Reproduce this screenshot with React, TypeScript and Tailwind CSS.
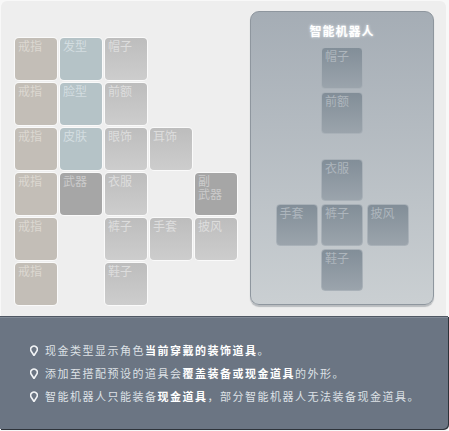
const FONT = { fontFamily: '"Noto Sans CJK SC", "Noto Sans", sans-serif' }

type Tone = 'tan' | 'blue' | 'gray' | 'dark' | 'none'

const TONES: Record<Tone, string> = {
  tan: 'bg-[#c3beb7] text-[#dcd8d1]',
  blue: 'bg-[#b5c3c7] text-[#d3dde0]',
  gray: 'bg-gradient-to-b from-[#bdbdbd] to-[#cdcdcd] text-[#dddddd]',
  dark: 'bg-[#a6a6a6] text-[#cbcbcb]',
  none: '',
}

const GRID: [string, Tone][][] = [
  [['戒指', 'tan'], ['发型', 'blue'], ['帽子', 'gray'], ['', 'none'], ['', 'none']],
  [['戒指', 'tan'], ['脸型', 'blue'], ['前额', 'gray'], ['', 'none'], ['', 'none']],
  [['戒指', 'tan'], ['皮肤', 'blue'], ['眼饰', 'gray'], ['耳饰', 'gray'], ['', 'none']],
  [['戒指', 'tan'], ['武器', 'dark'], ['衣服', 'gray'], ['', 'none'], ['副\n武器', 'dark']],
  [['戒指', 'tan'], ['', 'none'], ['裤子', 'gray'], ['手套', 'gray'], ['披风', 'gray']],
  [['戒指', 'tan'], ['', 'none'], ['鞋子', 'gray'], ['', 'none'], ['', 'none']],
]

function Slot({ label, tone }: { label: string; tone: Tone }) {
  if (tone === 'none') return <div className="w-[42px] h-[42px]" />
  return (
    <div
      className={`w-[42px] h-[42px] rounded-[4px] shadow-[0_0_0_1px_#fafafa] px-[3px] pt-[1px] text-[12px] leading-[13px] whitespace-pre-line ${TONES[tone]}`}
    >
      {label}
    </div>
  )
}

function RobotSlot({ label }: { label: string }) {
  return (
    <div className="w-[42px] h-[42px] rounded-[4px] border border-[#a9b1b8] bg-gradient-to-b from-[#828e98] to-[#9ba4ac] px-[3px] pt-[1px] text-[12px] leading-[13px] text-[#aeb6bd]">
      {label}
    </div>
  )
}

function Pin() {
  return (
    <svg width="8" height="11" viewBox="0 0 8 11" className="shrink-0">
      <path d="M4 10.5 L1.2 6.2 A3.3 3.3 0 1 1 6.8 6.2 Z" fill="none" stroke="#f2f4f6" strokeWidth="1.6" strokeLinejoin="round" />
    </svg>
  )
}

const NOTES: [string, boolean][][] = [
  [['现金类型显示角色', false], ['当前穿戴的装饰道具', true], ['。', false]],
  [['添加至搭配预设的道具会', false], ['覆盖装备或现金道具', true], ['的外形。', false]],
  [['智能机器人只能装备', false], ['现金道具', true], ['，部分智能机器人无法装备现金道具。', false]],
]

export default function App() {
  return (
    <div className="w-[449px] h-[431px] bg-[#f8f8f8] flex flex-col" style={FONT}>
      {/* equipment area */}
      <div className="ml-[1px] mt-[1px] w-[445px] h-[315px] rounded-t-[6px] bg-[#eeeeee] flex">
        <div className="ml-[14px] mt-[37px] grid grid-cols-[repeat(5,42px)] auto-rows-[42px] gap-[3px] h-fit">
          {GRID.flat().map(([label, tone], i) => (
            <Slot key={i} label={label} tone={tone} />
          ))}
        </div>

        {/* robot panel */}
        <div className="ml-auto mr-[12px] mt-[10px] w-[184px] h-[294px] rounded-[9px] border border-[#8e969e] bg-gradient-to-b from-[#a5adb5] to-[#cacfd2] shadow-[0_2px_1px_#b9bcbf] flex flex-col items-center">
          <div className="mt-[11px] text-[12px] leading-[16px] font-bold text-white tracking-[1px] [text-shadow:0_0_3px_#eef2f5]">
            智能机器人
          </div>
          <div className="mt-[8px] flex flex-col gap-[3px]">
            <RobotSlot label="帽子" />
            <RobotSlot label="前额" />
          </div>
          <div className="mt-[25px] flex flex-col items-center gap-[3px]">
            <RobotSlot label="衣服" />
            <div className="flex gap-[3.5px]">
              <RobotSlot label="手套" />
              <RobotSlot label="裤子" />
              <RobotSlot label="披风" />
            </div>
            <RobotSlot label="鞋子" />
          </div>
        </div>
      </div>

      {/* notes */}
      <div className="w-[448px] h-[113px] rounded-br-[5px] bg-[#6b7583] border-t border-[#4f5763] shadow-[inset_0_1px_0_#818a96,1px_1px_0_#2e333a] flex flex-col justify-center gap-[8px] pl-[30px]">
        {NOTES.map((parts, i) => (
          <div key={i} className="flex items-center gap-[7px] text-[11px] leading-[15px] tracking-[1.5px] text-[#dde1e6]">
            <Pin />
            <span>
              {parts.map(([t, b], j) => (
                <span key={j} className={b ? 'font-bold text-white' : ''}>{t}</span>
              ))}
            </span>
          </div>
        ))}
      </div>
    </div>
  )
}
